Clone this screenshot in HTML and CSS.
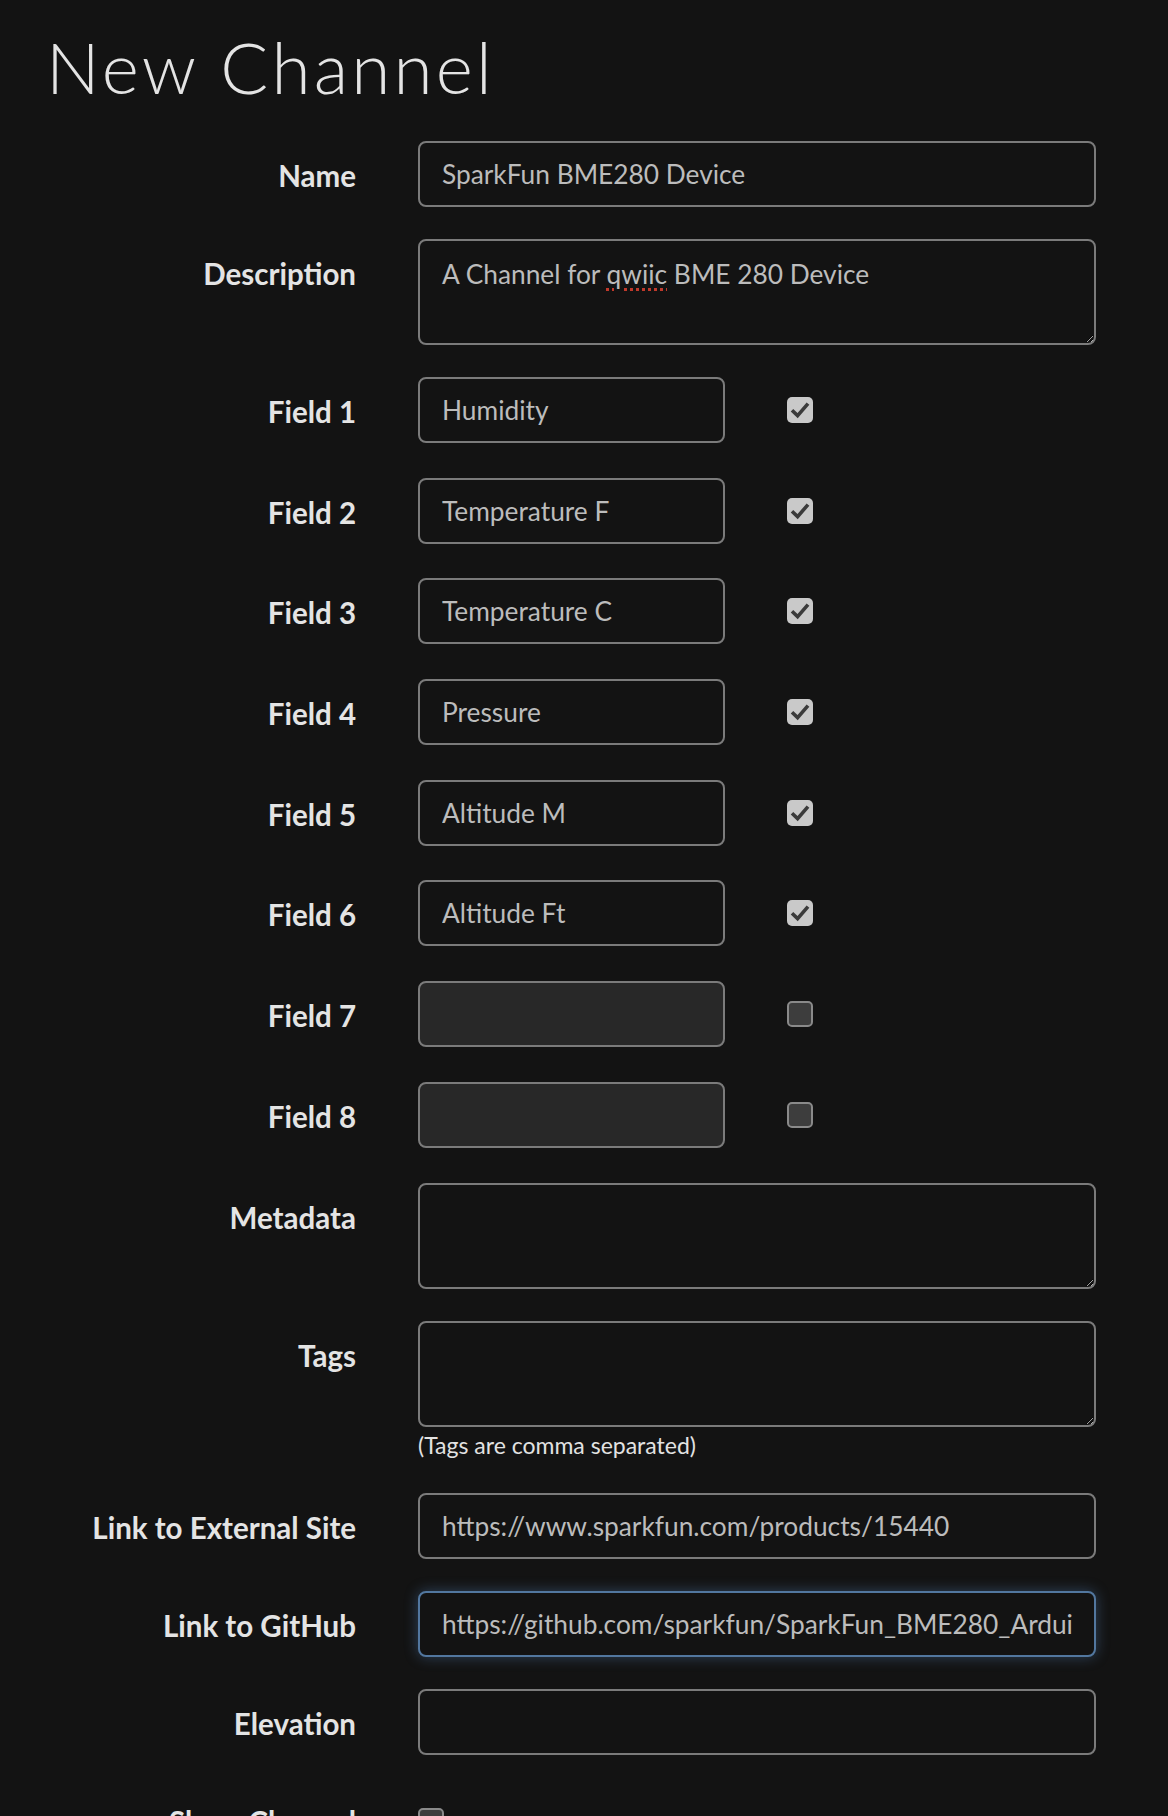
FILE: index.html
```html
<!DOCTYPE html>
<html lang="en">
<head>
<meta charset="utf-8">
<title>New Channel</title>
<link rel="stylesheet" href="styles.css">
</head>
<body>
<div class="page">
  <h1 class="title">New Channel</h1>
  <form class="form">
    <div class="row">
      <label class="lbl">Name</label>
      <div class="ctrl"><input class="text" type="text" value="SparkFun BME280 Device"></div>
    </div>
    <div class="row">
      <label class="lbl">Description</label>
      <div class="ctrl ta-wrap">
        <textarea class="area" spellcheck="false">A Channel for qwiic BME 280 Device</textarea>
        <div class="ta-mirror" aria-hidden="true">A Channel for <span class="sp">qwiic</span></div>
      </div>
    </div>

    <div class="row field">
      <label class="lbl">Field 1</label>
      <div class="ctrl fctrl"><input class="text short" type="text" value="Humidity"><span class="cb on"><svg viewBox="0 0 26 26" width="26" height="26"><path d="M5 13.2 L10.6 18.6 L21 6.6" fill="none" stroke="#3b3b3b" stroke-width="3.6"/></svg></span></div>
    </div>
    <div class="row field">
      <label class="lbl">Field 2</label>
      <div class="ctrl fctrl"><input class="text short" type="text" value="Temperature F"><span class="cb on"><svg viewBox="0 0 26 26" width="26" height="26"><path d="M5 13.2 L10.6 18.6 L21 6.6" fill="none" stroke="#3b3b3b" stroke-width="3.6"/></svg></span></div>
    </div>
    <div class="row field">
      <label class="lbl">Field 3</label>
      <div class="ctrl fctrl"><input class="text short" type="text" value="Temperature C"><span class="cb on"><svg viewBox="0 0 26 26" width="26" height="26"><path d="M5 13.2 L10.6 18.6 L21 6.6" fill="none" stroke="#3b3b3b" stroke-width="3.6"/></svg></span></div>
    </div>
    <div class="row field">
      <label class="lbl">Field 4</label>
      <div class="ctrl fctrl"><input class="text short" type="text" value="Pressure"><span class="cb on"><svg viewBox="0 0 26 26" width="26" height="26"><path d="M5 13.2 L10.6 18.6 L21 6.6" fill="none" stroke="#3b3b3b" stroke-width="3.6"/></svg></span></div>
    </div>
    <div class="row field">
      <label class="lbl">Field 5</label>
      <div class="ctrl fctrl"><input class="text short" type="text" value="Altitude M"><span class="cb on"><svg viewBox="0 0 26 26" width="26" height="26"><path d="M5 13.2 L10.6 18.6 L21 6.6" fill="none" stroke="#3b3b3b" stroke-width="3.6"/></svg></span></div>
    </div>
    <div class="row field">
      <label class="lbl">Field 6</label>
      <div class="ctrl fctrl"><input class="text short" type="text" value="Altitude Ft"><span class="cb on"><svg viewBox="0 0 26 26" width="26" height="26"><path d="M5 13.2 L10.6 18.6 L21 6.6" fill="none" stroke="#3b3b3b" stroke-width="3.6"/></svg></span></div>
    </div>
    <div class="row field">
      <label class="lbl">Field 7</label>
      <div class="ctrl fctrl"><input class="text short disabled" type="text" value=""><span class="cb off"></span></div>
    </div>
    <div class="row field">
      <label class="lbl">Field 8</label>
      <div class="ctrl fctrl"><input class="text short disabled" type="text" value=""><span class="cb off"></span></div>
    </div>

    <div class="row">
      <label class="lbl">Metadata</label>
      <div class="ctrl"><textarea class="area" spellcheck="false"></textarea></div>
    </div>
    <div class="row tags-row">
      <label class="lbl">Tags</label>
      <div class="ctrl">
        <textarea class="area" spellcheck="false"></textarea>
        <div class="note">(Tags are comma separated)</div>
      </div>
    </div>
    <div class="row">
      <label class="lbl">Link to External Site</label>
      <div class="ctrl"><input class="text" type="text" value="https://www.sparkfun.com/products/15440"></div>
    </div>
    <div class="row">
      <label class="lbl">Link to GitHub</label>
      <div class="ctrl"><input class="text focus" type="text" value="https://github.com/sparkfun/SparkFun_BME280_Arduino_Library"></div>
    </div>
    <div class="row">
      <label class="lbl">Elevation</label>
      <div class="ctrl"><input class="text" type="text" value=""></div>
    </div>
    <div class="row">
      <label class="lbl">Show Channel</label>
      <div class="ctrl"><span class="cb off show"></span></div>
    </div>
  </form>
</div>
</body>
</html>
```
FILE: styles.css
```css
html, body {
  margin: 0;
  background: #131313;
}
body {
  font-family: Lato, "Open Sans", "Liberation Sans", sans-serif;
  color: #e6e6e6;
}
.page {
  padding: 25px 72px 40px 44px;
}
.title {
  margin: 0 0 32px;
  padding-left: 2px;
  font-weight: 300;
  font-size: 71px;
  letter-spacing: 3.2px;
  line-height: 84px;
  color: #e4e4e4;
}
.form {
  margin: 0;
}
.row {
  display: flex;
  align-items: flex-start;
  margin-bottom: 32px;
}
.row.field {
  margin-bottom: 34.7px;
}
.row.tags-row {
  margin-bottom: 31px;
}
.lbl {
  flex: 0 0 312px;
  margin-right: 62px;
  padding-top: 13px;
  text-align: right;
  font-weight: 700;
  font-size: 29.5px;
  line-height: 43px;
  color: #e4e4e4;
}
.ctrl {
  flex: 0 0 678px;
  width: 678px;
}
.fctrl {
  display: flex;
  align-items: center;
}
.text,
.area {
  display: block;
  box-sizing: border-box;
  width: 100%;
  margin: 0;
  border: 2px solid #7b7b7b;
  border-radius: 8px;
  background: #131313;
  color: #bcbcbc;
  font-family: Lato, "Open Sans", "Liberation Sans", sans-serif;
  font-size: 26.3px;
  outline: none;
  color-scheme: dark;
}
.text {
  height: 66px;
  padding: 0 22px;
}
.text.short {
  width: 307px;
  flex: none;
}
.text.disabled {
  background: #282828;
}
.text.focus {
  border-color: #52779f;
  box-shadow: 0 0 14px rgba(90, 140, 200, 0.4);
}
.area {
  height: 106px;
  padding: 15px 22px;
  line-height: 37px;
  resize: both;
}
.ta-wrap {
  position: relative;
}
.ta-mirror {
  position: absolute;
  top: 0;
  left: 0;
  padding: 17px 24px;
  font-size: 26.3px;
  line-height: 37px;
  color: transparent;
  pointer-events: none;
  white-space: pre;
}
.sp {
  text-decoration: underline dotted #c0392b;
  text-decoration-thickness: 3px;
  text-underline-offset: 4px;
}
.cb {
  display: block;
  box-sizing: border-box;
  width: 26px;
  height: 26px;
  margin-left: 62px;
  border-radius: 5px;
  flex: none;
}
.cb svg {
  display: block;
}
.cb.on {
  background: #c9c9c9;
}
.cb.off {
  background: #3d3d3d;
  border: 2px solid #8a8a8a;
}
.cb.show {
  margin-left: 0;
  margin-top: 21px;
}
.note {
  margin-top: 2px;
  font-size: 23px;
  line-height: 33px;
  color: #e2e2e2;
}
```
